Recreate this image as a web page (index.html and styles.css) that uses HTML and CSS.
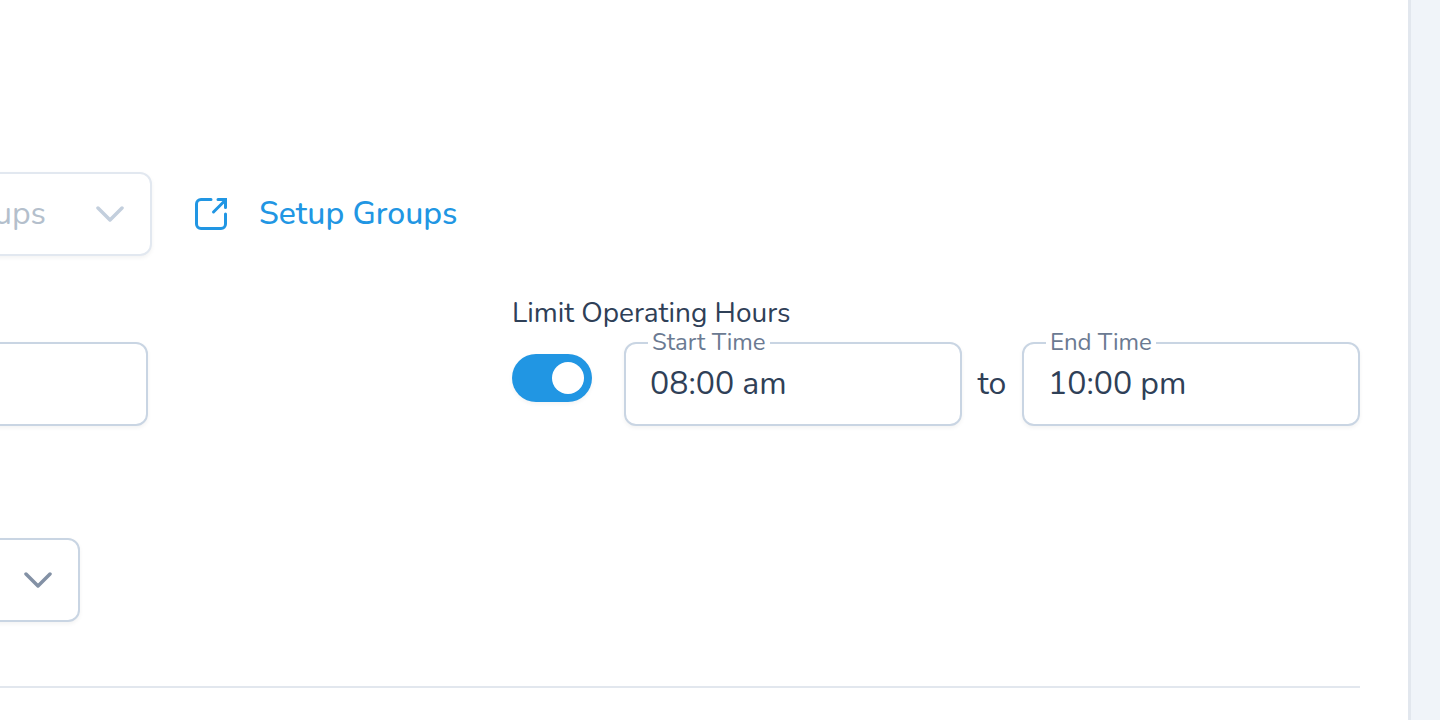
FILE: index.html
```html
<!DOCTYPE html>
<html lang="en">
<head>
  <meta charset="UTF-8">
  <meta name="viewport" content="width=device-width, initial-scale=1.0">
  <title>Settings</title>
  <link rel="stylesheet" href="styles.css">
</head>
<body>
  <main class="panel">
    <div class="row group-row">
      <div class="select-box select-group">
        <select aria-label="Group" disabled>
          <option>ups</option>
        </select>
        <svg class="chevron" viewBox="0 0 28 18"><path d="M2 3 14 15 26 3"/></svg>
      </div>
      <a class="setup-link" href="#">
        <svg class="link-icon" viewBox="0 0 34 34">
          <path d="M17 2.5H7A4.5 4.5 0 0 0 2.5 7V27A4.5 4.5 0 0 0 7 31.5H27A4.5 4.500 0 0 0 31.5 27V17"/>
          <path d="M19.5 15 31 3.5M24 2.5H31.5V10.5"/>
          <path class="tip" d="M26 1H33V8Z"/>
        </svg>
        <span>Setup Groups</span>
      </a>
    </div>

    <div class="row hours-row">
      <input class="text-input name-input" type="text" aria-label="Name">
      <div class="hours">
        <label class="hours-title" for="limitHours">Limit Operating Hours</label>
        <div class="hours-controls">
          <input class="toggle" type="checkbox" id="limitHours" checked>
          <div class="field">
            <label for="startTime">Start Time</label>
            <input class="text-input" type="text" id="startTime" value="08:00 am">
          </div>
          <span class="to">to</span>
          <div class="field">
            <label for="endTime">End Time</label>
            <input class="text-input" type="text" id="endTime" value="10:00 pm">
          </div>
        </div>
      </div>
    </div>

    <div class="row option-row">
      <div class="select-box select-option">
        <select aria-label="Option">
          <option></option>
        </select>
        <svg class="chevron" viewBox="0 0 28 18"><path d="M2 3 14 15 26 3"/></svg>
      </div>
    </div>

    <hr class="divider">
  </main>
</body>
</html>
```
FILE: styles.css
```css
* {
  box-sizing: border-box;
}
body {
  margin: 0;
  background: #f0f4f9;
  color: #2f4057;
  font-family: Nunito, Lato, sans-serif;
  font-size: 32px;
}
.panel {
  min-height: 100vh;
  margin-right: 29px;
  padding: 172px 48px 32px 0;
  background: #fff;
  border-right: 3px solid #e2e7ee;
  overflow: hidden;
}
.row {
  display: flex;
}
.group-row {
  align-items: center;
}

/* inputs and selects */
.text-input,
.select-box select {
  display: block;
  width: 100%;
  height: 84px;
  margin: 0;
  padding: 0 24px 2px;
  background: #fff;
  border: 2px solid #c9d5e3;
  border-radius: 12px;
  box-shadow: 0 2px 4px rgba(0, 0, 0, 0.05);
  color: inherit;
  font: inherit;
}
.select-box select {
  appearance: none;
  padding: 0 8px 2px;
}
.select-box select:disabled {
  border-color: #e2e8f0;
  color: #b4bfcc;
  opacity: 1;
}
.select-box {
  position: relative;
  margin-left: -16px;
}
.select-group {
  width: 168px;
}
.select-option {
  width: 96px;
}
.chevron {
  position: absolute;
  top: 33px;
  right: 28px;
  width: 28px;
  height: 18px;
  fill: none;
  stroke: #8391a5;
  stroke-width: 3.5;
  stroke-linecap: round;
  stroke-linejoin: round;
  pointer-events: none;
}
.select-group .chevron {
  stroke: #c3cfdd;
}

.setup-link {
  display: flex;
  align-items: center;
  gap: 31px;
  margin-left: 42px;
  color: #2196e3;
  font-weight: 500;
  text-decoration: none;
}
.setup-link span {
  padding-bottom: 2px;
}
.link-icon {
  width: 34px;
  height: 34px;
  fill: none;
  stroke: #2196e3;
  stroke-width: 3;
  stroke-linecap: round;
}
.link-icon .tip {
  fill: #2196e3;
  stroke: none;
}

/* operating hours */
.hours-row {
  align-items: flex-end;
  margin-top: 38px;
}
.name-input {
  flex: none;
  width: 164px;
  margin: 0 364px 0 -16px;
}
.hours {
  flex: 1;
}
.hours-title {
  display: block;
  height: 48px;
  font-size: 28px;
  line-height: 38px;
}
.hours-controls {
  display: flex;
  align-items: center;
}
.toggle {
  appearance: none;
  flex: none;
  width: 80px;
  height: 48px;
  margin: 0 32px 12px 0;
  padding: 8px;
  background: #e2e8f0;
  border-radius: 24px;
  box-shadow: 0 2px 4px rgba(0, 0, 0, 0.05);
  cursor: pointer;
}
.toggle::before {
  content: "";
  display: block;
  width: 32px;
  height: 32px;
  background: #fff;
  border-radius: 50%;
}
.toggle:checked {
  background: #2196e3;
}
.toggle:checked::before {
  margin-left: auto;
}
.field {
  position: relative;
  flex: 1;
}
.field label {
  position: absolute;
  top: -14px;
  left: 24px;
  padding: 0 4px;
  background: #fff;
  color: #6b7a92;
  font-size: 24px;
  line-height: 28px;
}
.to {
  width: 60px;
  padding-bottom: 2px;
  text-align: center;
}

.option-row {
  margin-top: 112px;
}
.divider {
  height: 2px;
  margin: 64px 0 0;
  background: #e2e7ee;
  border: 0;
}
```
